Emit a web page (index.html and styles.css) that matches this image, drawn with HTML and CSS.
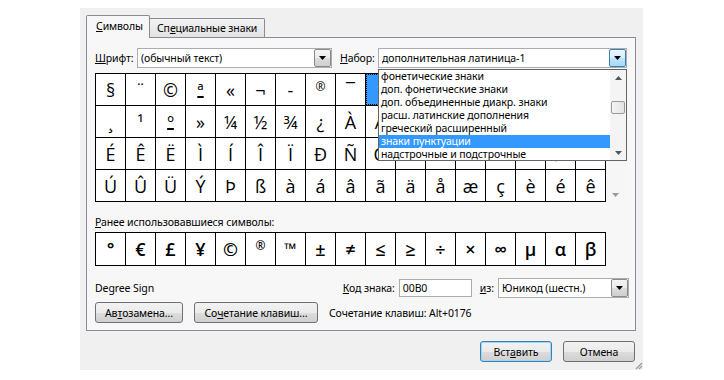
FILE: index.html
```html
<!DOCTYPE html>
<html lang="ru">
<head>
<meta charset="utf-8">
<title>Символ</title>
<link rel="stylesheet" href="styles.css">
</head>
<body>
<div class="dialog">
  <div class="tabs">
    <div class="tab tab-active"><u>С</u>имволы</div>
    <div class="tab tab-inactive">Сп<u>е</u>циальные знаки</div>
  </div>
  <div class="panel">
    <div class="font-row">
      <span class="lbl-font"><u>Ш</u>рифт:</span>
      <div class="combo combo-font">
        <span class="combo-text">(обычный текст)</span>
        <span class="dd-btn"><svg width="7" height="4" viewBox="0 0 7 4"><path d="M0 0H7L3.5 4Z" fill="#000"/></svg></span>
      </div>
      <span class="lbl-set"><u>Н</u>абор:</span>
      <div class="combo combo-set">
        <span class="combo-text">дополнительная латиница-1</span>
        <span class="dd-btn dd-hot"><svg width="7" height="4" viewBox="0 0 7 4"><path d="M0 0H7L3.5 4Z" fill="#000"/></svg></span>
      </div>
    </div>

    <div class="grid-wrap">
      <div class="grid">
        <div class="cell">§</div><div class="cell">¨</div><div class="cell">©</div><div class="cell cell-ord">ª</div><div class="cell">«</div><div class="cell">¬</div><div class="cell">-</div><div class="cell cell-sup">®</div><div class="cell">¯</div><div class="cell cell-sel">°</div><div class="cell">±</div><div class="cell">²</div><div class="cell">³</div><div class="cell">´</div><div class="cell">µ</div><div class="cell">¶</div><div class="cell">·</div>
        <div class="cell">¸</div><div class="cell">¹</div><div class="cell cell-ord">º</div><div class="cell">»</div><div class="cell">¼</div><div class="cell">½</div><div class="cell">¾</div><div class="cell">¿</div><div class="cell">À</div><div class="cell">Á</div><div class="cell">Â</div><div class="cell">Ã</div><div class="cell">Ä</div><div class="cell">Å</div><div class="cell">Æ</div><div class="cell">Ç</div><div class="cell">È</div>
        <div class="cell">É</div><div class="cell">Ê</div><div class="cell">Ë</div><div class="cell">Ì</div><div class="cell">Í</div><div class="cell">Î</div><div class="cell">Ï</div><div class="cell">Ð</div><div class="cell">Ñ</div><div class="cell">Ò</div><div class="cell">Ó</div><div class="cell">Ô</div><div class="cell">Õ</div><div class="cell">Ö</div><div class="cell">×</div><div class="cell">Ø</div><div class="cell">Ù</div>
        <div class="cell">Ú</div><div class="cell">Û</div><div class="cell">Ü</div><div class="cell">Ý</div><div class="cell">Þ</div><div class="cell">ß</div><div class="cell">à</div><div class="cell">á</div><div class="cell">â</div><div class="cell">ã</div><div class="cell">ä</div><div class="cell">å</div><div class="cell">æ</div><div class="cell">ç</div><div class="cell">è</div><div class="cell">é</div><div class="cell">ê</div>
      </div>
      <div class="vscroll">
        <svg width="7" height="4" viewBox="0 0 7 4"><path d="M0 0H7L3.5 4Z" fill="#9a9a9a"/></svg>
      </div>
    </div>

    <div class="recent-label"><u>Р</u>анее использовавшиеся символы:</div>
    <div class="grid recent">
      <div class="cell">°</div><div class="cell">€</div><div class="cell">£</div><div class="cell">¥</div><div class="cell">©</div><div class="cell cell-sup">®</div><div class="cell cell-tm">™</div><div class="cell">±</div><div class="cell">≠</div><div class="cell">≤</div><div class="cell">≥</div><div class="cell">÷</div><div class="cell">×</div><div class="cell">∞</div><div class="cell">µ</div><div class="cell">α</div><div class="cell">β</div>
    </div>

    <div class="info-row">
      <span>Degree Sign</span>
      <div class="code-group">
        <span><u>К</u>од знака:</span>
        <div class="code-input">00B0</div>
        <span class="from-lbl"><u>и</u>з:</span>
        <div class="combo combo-enc">
          <span class="combo-text">Юникод (шестн.)</span>
          <span class="dd-btn"><svg width="7" height="4" viewBox="0 0 7 4"><path d="M0 0H7L3.5 4Z" fill="#000"/></svg></span>
        </div>
      </div>
    </div>

    <div class="btn-row">
      <div class="btn btn-auto">Ав<u>т</u>озамена...</div>
      <div class="btn btn-keys">Со<u>ч</u>етание клавиш...</div>
      <span class="keys-text">Сочетание клавиш: Alt+0176</span>
    </div>
  </div>

  <div class="footer">
    <div class="btn btn-default">Вст<u>а</u>вить</div>
    <div class="btn btn-cancel">Отмена</div>
  </div>

  <div class="list">
    <div class="list-items">
      <div class="item">фонетические знаки</div>
      <div class="item">доп. фонетические знаки</div>
      <div class="item">доп. объединенные диакр. знаки</div>
      <div class="item">расш. латинские дополнения</div>
      <div class="item">греческий расширенный</div>
      <div class="item item-sel">знаки пунктуации</div>
      <div class="item">надстрочные и подстрочные</div>
    </div>
    <div class="list-scroll">
      <svg class="arr-up" width="7" height="4" viewBox="0 0 7 4"><path d="M0 4H7L3.5 0Z" fill="#555"/></svg>
      <div class="thumb"></div>
      <svg class="arr-down" width="7" height="4" viewBox="0 0 7 4"><path d="M0 0H7L3.5 4Z" fill="#555"/></svg>
    </div>
  </div>

  <svg class="grip" width="10" height="10" viewBox="0 0 10 10">
    <path d="M9 3L3 9M9 6L6 9" stroke="#9a9a9a" stroke-width="1.2"/>
  </svg>
</div>
</body>
</html>
```

FILE: styles.css
```css
* { box-sizing: border-box; }

body {
  margin: 0;
  background: #ffffff;
  font-family: "Noto Sans", "Open Sans", sans-serif;
  font-size: 10.5px;
  letter-spacing: -0.1px;
  color: #000;
}

u { text-decoration: underline; text-underline-offset: 1px; }

.dialog {
  position: relative;
  margin: 8px 0 0 80px;
  width: 563px;
  height: 362px;
  background: #f0f0f0;
}

.tabs {
  display: flex;
  align-items: flex-end;
  height: 29px;
  padding-left: 6px;
}

.tab {
  display: flex;
  align-items: center;
  border: 1px solid #898c95;
  border-bottom: none;
  white-space: nowrap;
}

.tab-active {
  width: 64px;
  height: 23px;
  margin-bottom: -1px;
  padding-left: 9px;
  padding-bottom: 2px;
  background: #f7f7f7;
  border-radius: 2px 2px 0 0;
  position: relative;
  z-index: 1;
}

.tab-inactive {
  width: 115px;
  height: 19px;
  padding-left: 7px;
  border-left: none;
  background: linear-gradient(#f2f2f2, #e3e3e3);
  border-radius: 0 2px 0 0;
}

.panel {
  margin-left: 6px;
  width: 550px;
  height: 294px;
  border: 1px solid #898c95;
  background: #f7f7f7;
  padding: 0 6px 0 8px;
}

.font-row {
  display: flex;
  align-items: center;
  margin-top: 10px;
  height: 20px;
}

.lbl-font { width: 42px; }
.lbl-set { margin-left: 8px; width: 38px; }

.combo {
  display: flex;
  align-items: center;
  height: 20px;
  border: 1px solid #abadb3;
  background: #fff;
  padding-left: 3px;
  white-space: nowrap;
}

.combo-text { flex: 1; overflow: hidden; }

.combo-font { width: 195px; }
.combo-set { width: 249px; }

.dd-btn {
  flex: none;
  width: 17px;
  height: 18px;
  display: flex;
  align-items: center;
  justify-content: center;
  border: 1px solid #8a8a8a;
  border-radius: 2px;
  background: linear-gradient(#f4f4f4 0%, #ebebeb 50%, #dcdcdc 51%, #cfcfcf 100%);
}

.dd-hot {
  border-color: #3c7fb1;
  background: linear-gradient(#eaf6fd 0%, #d9f0fc 50%, #bee6fd 51%, #a7d9f5 100%);
}

.grid-wrap {
  display: flex;
  margin-top: 5px;
  height: 129px;
}

.grid {
  display: grid;
  grid-template-columns: repeat(17, 29px);
  grid-auto-rows: 31px;
  gap: 1px;
  padding: 1px;
  width: 511px;
  background: #000;
}

.cell {
  display: flex;
  align-items: center;
  justify-content: center;
  background: #fff;
  font-family: "Open Sans", "Noto Sans", sans-serif;
  font-size: 18px;
  letter-spacing: 0;
  line-height: 1;
}

.cell-sup {
  font-size: 12px;
  align-items: flex-start;
  padding-top: 7px;
}

.cell-tm {
  font-size: 16px;
}

.cell-ord {
  text-decoration: underline;
  text-decoration-thickness: 2px;
  text-underline-offset: -1px;
}

.cell-sel {
  background: #3399ff;
  color: #fff;
  outline: 1px dotted #000;
  outline-offset: -1px;
}

.vscroll {
  width: 19px;
  background: #f6f6f6;
  display: flex;
  flex-direction: column;
  justify-content: flex-end;
  align-items: center;
  padding-bottom: 5px;
}

.recent-label {
  margin-top: 13px;
  height: 14px;
  line-height: 14px;
}

.recent {
  margin-top: 3px;
  grid-auto-rows: 32px;
}

.recent .cell { font-weight: 600; }

.info-row {
  display: flex;
  align-items: center;
  margin-top: 12px;
  height: 20px;
}

.code-group {
  margin-left: auto;
  display: flex;
  align-items: center;
}

.code-input {
  width: 73px;
  height: 18px;
  margin-left: 4px;
  border: 1px solid #abadb3;
  background: #fff;
  padding-left: 3px;
  display: flex;
  align-items: center;
}

.from-lbl { margin-left: 8px; }

.combo-enc { width: 131px; margin-left: 4px; }

.btn-row {
  display: flex;
  align-items: center;
  margin-top: 4px;
}

.btn {
  height: 21px;
  display: flex;
  align-items: center;
  justify-content: center;
  border: 1px solid #707070;
  border-radius: 3px;
  background: linear-gradient(#f2f2f2 0%, #ebebeb 50%, #dddddd 51%, #cfcfcf 100%);
  white-space: nowrap;
}

.btn-auto { width: 88px; }
.btn-keys { width: 124px; margin-left: 11px; }
.keys-text { margin-left: 11px; }

.footer {
  display: flex;
  justify-content: flex-end;
  gap: 11px;
  padding-right: 8px;
  margin-top: 10px;
}

.btn-default, .btn-cancel { width: 72px; }

.btn-default {
  border-color: #3c7fb1;
  box-shadow: inset 0 0 0 1px #9fd6f5;
}

.list {
  position: absolute;
  left: 298px;
  top: 61px;
  width: 249px;
  height: 92px;
  display: flex;
  border: 1px solid #646464;
  background: #fff;
  z-index: 2;
}

.list-items {
  flex: 1;
  overflow: hidden;
}

.item {
  height: 13px;
  line-height: 13px;
  padding-left: 2px;
  white-space: nowrap;
}

.item-sel {
  background: #3399ff;
  color: #fff;
}

.list-scroll {
  width: 16px;
  background: #f4f4f4;
  display: flex;
  flex-direction: column;
  align-items: center;
  padding: 6px 0 5px;
}

.thumb {
  margin-top: 21px;
  width: 14px;
  height: 13px;
  border: 1px solid #9a9a9a;
  border-radius: 2px;
  background: linear-gradient(90deg, #f4f4f4, #e3e3e3);
}

.arr-down { margin-top: auto; }

.grip {
  position: absolute;
  right: 0;
  bottom: 0;
}
```
